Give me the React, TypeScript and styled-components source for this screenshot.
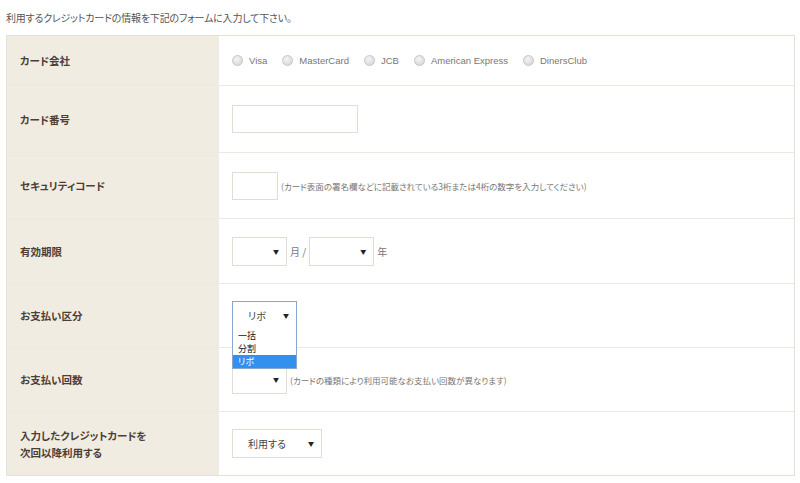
import React from "react";
import styled, { createGlobalStyle } from "styled-components";

const GlobalStyle = createGlobalStyle`
  html, body {
    margin: 0;
    padding: 0;
    background: #ffffff;
  }
  body {
    font-family: "Liberation Sans", "Noto Sans CJK JP", sans-serif;
    font-feature-settings: "palt";
    color: #555;
  }
`;

const Page = styled.div`
  width: 800px;
  height: 483px;
  padding: 11px 5px 0 6px;
  box-sizing: border-box;
`;

const Intro = styled.p`
  margin: 0 0 11px;
  font-size: 10px;
  line-height: 13px;
  color: #555;
  font-family: "Noto Sans CJK JP", sans-serif;
  letter-spacing: -0.2px;
`;

const Table = styled.div`
  width: 789px;
  border: 1px solid #e6e1d6;
  box-sizing: border-box;
`;

const Row = styled.div<{ $h: number }>`
  display: grid;
  grid-template-columns: 212px 1fr;
  height: ${(p) => p.$h}px;
  border-top: 1px solid #eee9e0;
  box-sizing: border-box;
  &:first-child {
    border-top: none;
  }
`;

const Label = styled.div`
  background: #f1ece1;
  display: flex;
  align-items: center;
  padding-left: 13px;
  font-family: "Noto Sans CJK JP", sans-serif;
  font-weight: 700;
  font-size: 10.5px;
  line-height: 17px;
  color: #4d3e35;
`;

const Field = styled.div`
  display: flex;
  align-items: center;
  padding-left: 13px;
  position: relative;
`;

const RadioGroup = styled.div`
  display: flex;
  align-items: center;
  gap: 15px;
`;

const RadioItem = styled.label`
  display: flex;
  align-items: center;
  gap: 6px;
  font-size: 9.5px;
  color: #777;
  font-family: "Liberation Sans", sans-serif;
`;

const RadioDot = styled.span`
  width: 9px;
  height: 9px;
  border-radius: 50%;
  border: 1px solid #c6c6c6;
  background: radial-gradient(circle at 40% 35%, #f4f4f4, #d2d2d2);
`;

const TextBox = styled.div<{ $w: number }>`
  width: ${(p) => p.$w}px;
  height: 28px;
  border: 1px solid #e2ddd2;
  box-sizing: border-box;
  background: #fff;
`;

const SelectBox = styled.div<{ $w: number; $focus?: boolean }>`
  width: ${(p) => p.$w}px;
  height: 29px;
  border: 1px solid ${(p) => (p.$focus ? "#8aa6cc" : "#e2ddd2")};
  box-sizing: border-box;
  background: #fff;
  display: flex;
  align-items: center;
  justify-content: space-between;
  padding: 0 7px 0 15px;
  font-family: "Noto Sans CJK JP", sans-serif;
  font-size: 10px;
  color: #444;
`;

const Arrow = styled.span`
  font-size: 6px;
  color: #222;
  margin-left: auto;
`;

const Unit = styled.span`
  font-family: "Noto Sans CJK JP", sans-serif;
  font-size: 10px;
  color: #777;
  margin: 0 3px;
`;

const Note = styled.span`
  font-family: "Noto Sans CJK JP", sans-serif;
  font-size: 8.5px;
  color: #777;
  margin-left: 3px;
`;

const Dropdown = styled.ul`
  position: absolute;
  left: 13px;
  top: 45px;
  width: 65px;
  margin: 0;
  padding: 0;
  list-style: none;
  background: #fff;
  border: 1px solid #8aa6cc;
  border-top: none;
  box-sizing: border-box;
  z-index: 2;
`;

const Option = styled.li<{ $active?: boolean }>`
  font-family: "Noto Sans CJK JP", sans-serif;
  font-size: 9px;
  line-height: 13px;
  height: 13px;
  padding-left: 5px;
  color: ${(p) => (p.$active ? "#fff" : "#111")};
  background: ${(p) => (p.$active ? "#3390ef" : "transparent")};
`;

const cards = ["Visa", "MasterCard", "JCB", "American Express", "DinersClub"];

export default function App() {
  return (
    <Page>
      <GlobalStyle />
      <Intro>利用するクレジットカードの情報を下記のフォームに入力して下さい。</Intro>
      <Table>
        <Row $h={49}>
          <Label>カード会社</Label>
          <Field>
            <RadioGroup>
              {cards.map((c) => (
                <RadioItem key={c}>
                  <RadioDot />
                  {c}
                </RadioItem>
              ))}
            </RadioGroup>
          </Field>
        </Row>
        <Row $h={67}>
          <Label>カード番号</Label>
          <Field>
            <TextBox $w={126} />
          </Field>
        </Row>
        <Row $h={66}>
          <Label>セキュリティコード</Label>
          <Field>
            <TextBox $w={46} />
            <Note>(カード表面の署名欄などに記載されている3桁または4桁の数字を入力してください)</Note>
          </Field>
        </Row>
        <Row $h={65}>
          <Label>有効期限</Label>
          <Field>
            <SelectBox $w={55}>
              <Arrow>▼</Arrow>
            </SelectBox>
            <Unit>月 /</Unit>
            <SelectBox $w={65}>
              <Arrow>▼</Arrow>
            </SelectBox>
            <Unit>年</Unit>
          </Field>
        </Row>
        <Row $h={64}>
          <Label>お支払い区分</Label>
          <Field>
            <SelectBox $w={65} $focus>
              リボ
              <Arrow>▼</Arrow>
            </SelectBox>
            <Dropdown>
              <Option>一括</Option>
              <Option>分割</Option>
              <Option $active>リボ</Option>
            </Dropdown>
          </Field>
        </Row>
        <Row $h={64}>
          <Label>お支払い回数</Label>
          <Field>
            <SelectBox $w={55}>
              <Arrow>▼</Arrow>
            </SelectBox>
            <Note>(カードの種類により利用可能なお支払い回数が異なります)</Note>
          </Field>
        </Row>
        <Row $h={64}>
          <Label>
            入力したクレジットカードを
            <br />
            次回以降利用する
          </Label>
          <Field>
            <SelectBox $w={90}>
              利用する
              <Arrow>▼</Arrow>
            </SelectBox>
          </Field>
        </Row>
      </Table>
    </Page>
  );
}
